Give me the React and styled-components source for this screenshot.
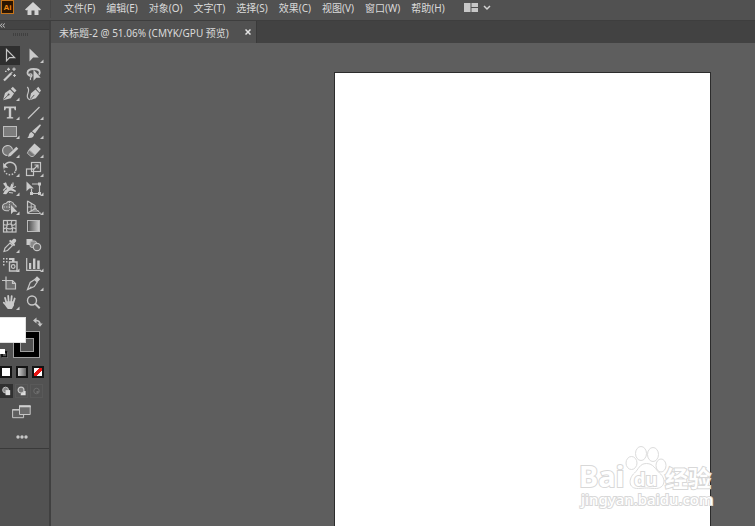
import React from 'react'
import { styled, createGlobalStyle } from 'styled-components'

const menus = [
  '文件(F)', '编辑(E)', '对象(O)', '文字(T)', '选择(S)',
  '效果(C)', '视图(V)', '窗口(W)', '帮助(H)',
]

const line = { fill: 'none', stroke: '#c6c6c6', strokeWidth: 1.2 }
const thin = { fill: 'none', stroke: '#c6c6c6', strokeWidth: 0.9 }
const solid = { fill: '#cacaca' }

// every icon is drawn on a 24x19 cell, "more" adds the flyout corner
const tools = [
  { name: '选择工具', active: true, icon: <path {...line} d="M6.5 3.500v11.300l3.100-3.200h5z" /> },
  { name: '直接选择工具', more: true, icon: <path {...solid} d="M5.500 2.500v13l3.600-4h5.700z" /> },
  {
    name: '魔棒工具',
    icon: (
      <g>
        <path d="M4 15.500l7.300-7.300" stroke="#cacaca" strokeWidth="2.200" />
        <path {...line} d="M8.500 2.800v3M7 4.300h3M14 2.500v3.400M12.300 4.200h3.400M14.500 9v3M13 10.500h3M5 6.300h1.600M11.300 8.200l1-1" />
      </g>
    ),
  },
  {
    name: '套索工具',
    icon: (
      <g>
        <path {...line} strokeWidth="1.800" d="M8 11.200c-3-.2-4.700-1.600-4.500-3.500C3.700 5.300 6.300 4 9.500 4s6.300 1.200 6.300 3.500c0 1-.4 1.700-1 2.200" />
        <path {...line} d="M5 10.300c0-1.800 3-1.800 3 0 0 2-2.300 1.500-1.500 4.700" />
        <path {...solid} d="M9.500 4.500v11.200l2.800-3h4.400z" />
      </g>
    ),
  },
  {
    name: '钢笔工具',
    more: true,
    icon: (
      <g>
        <path {...solid} d="M3 16.200l2-7.300 5-3.300 4 4-3.200 4.700z" />
        <path {...solid} d="M10.800 4.700l2-2 3.700 3.800-1.900 2z" />
        <path d="M3.500 15.700l4.800-4.800" stroke="#525252" strokeWidth="0.900" />
        <circle cx="8.600" cy="10.600" r="1" fill="#525252" />
      </g>
    ),
  },
  {
    name: '曲率工具',
    icon: (
      <g>
        <path {...solid} d="M5.500 16.200l1.500-7 4.500-3.600 4 4-3.700 4.600z" />
        <path {...solid} d="M12.300 4.700l2-2 2.700 3.800-1.400 2z" />
        <path d="M6 15.700l4.300-4.800" stroke="#525252" strokeWidth="0.900" />
        <path {...line} d="M3.200 3c3 2.500.8 5.300.2 8-.4 2.200.5 4.500 2.500 4.700" />
      </g>
    ),
  },
  { name: '文字工具', more: true, icon: <path {...solid} d="M4 3.500h12v3.700h-1.200L14 5.200h-2.800v8.700l2 .4v1.200H6.800v-1.200l2-.4V5.200H6l-.8 2H4z" /> },
  { name: '直线段工具', more: true, icon: <path {...line} d="M4 15.500L15.500 4" /> },
  { name: '矩形工具', more: true, icon: <rect x="3.500" y="4.500" width="13" height="10" fill="#7c7c7c" stroke="#bdbdbd" /> },
  {
    name: '画笔工具',
    more: true,
    icon: (
      <g {...solid}>
        <path d="M16 2.300l1 1-6 8.300-3-2.400z" />
        <path d="M7.500 10l2.500 2.200c.1 2.600-2.200 4.500-6.700 3.600 1.600-.8 1.300-2.100 1.900-3.500.4-1.100 1.300-1.900 2.300-2.300z" />
      </g>
    ),
  },
  {
    name: 'Shaper 工具',
    more: true,
    icon: (
      <g>
        <path fill="#777" stroke="#c6c6c6" strokeWidth="1.200" d="M7.500 14.500a5 5 0 1 1 5-6" />
        <path {...solid} d="M8 15.800l.6-2.800 7.700-7.300 2 2.100-7.500 7.300z" />
      </g>
    ),
  },
  {
    name: '橡皮擦工具',
    more: true,
    icon: (
      <g>
        <path {...solid} d="M10.500 2.500l6.300 5.500-5.500 6-6.500-5.500z" />
        <path fill="#777" stroke="#c6c6c6" strokeWidth="0.800" d="M5 8.800l5.800 5-1.500 1.700H7l-3.700-3.300z" />
      </g>
    ),
  },
  {
    name: '旋转工具',
    more: true,
    icon: (
      <g>
        <path {...line} strokeWidth="1.500" d="M4.600 5.600A6 6 0 0 1 15.500 11" />
        <path {...line} strokeWidth="1.500" strokeDasharray="1.500 1.500" d="M15.200 11.700A6 6 0 0 1 4 8.500" />
        <path {...solid} d="M3.200 2.700v5h5z" />
      </g>
    ),
  },
  {
    name: '比例缩放工具',
    more: true,
    icon: (
      <g>
        <rect {...line} x="7.500" y="2.500" width="9" height="9" />
        <rect {...line} x="2.500" y="9" width="7" height="6.500" />
        <path {...line} d="M9 10l4.500-4.500M10.500 5h3.500v3.500" />
      </g>
    ),
  },
  {
    name: '宽度工具',
    more: true,
    icon: (
      <g>
        <path {...solid} d="M3 4.500l3-1.300 1.200 3.300 2.800 2 1.400-4 2 1.800-1 3 3.600 2.400-.5 1.200-4.500-1.300-2 .5-2.800 3.200-3.200-.3 1.800-3.500L7 10z" />
        <path {...line} d="M3.300 11.500L6 8.500M9 13.500l4 .5M13 3.500v3M12 9l4-1.500" />
      </g>
    ),
  },
  {
    name: '自由变换工具',
    more: true,
    icon: (
      <g>
        <path {...line} d="M8 5h7.500v9.500h-8V10" />
        <path {...solid} d="M2.500 2.500v9.700l2.800-2.700h4.500zM14 3.500h3v3h-3zM14 13h3v3h-3zM6 13h3v3H6z" />
      </g>
    ),
  },
  {
    name: '形状生成器工具',
    more: true,
    icon: (
      <g>
        <path fill="#6f6f6f" stroke="#c6c6c6" strokeWidth="1.100" d="M9 12.800H6.700a4 3.800 0 0 1-.5-7.600 4.300 4 0 0 1 7.800 1.300c1.500.4 2.300 1.500 2.300 2.800" />
        <path {...thin} d="M3.500 9h8M9.500 3.500v8" strokeDasharray="1.500 1" />
        <path {...solid} d="M11 7v9.300l2.400-2.600h4z" />
      </g>
    ),
  },
  {
    name: '透视网格工具',
    more: true,
    icon: (
      <g>
        <path {...line} d="M3.500 2.800v12.500M3.500 3l7.500 4.500v3.200L3.500 15" />
        <path {...thin} d="M3.500 9h8M7.200 5v8.200M11 10.500l6 5M3.500 15.500h13M7 13h8M9 11h4" />
      </g>
    ),
  },
  {
    name: '网格工具',
    icon: (
      <g>
        <rect {...line} x="3.500" y="3.500" width="12.500" height="11.500" />
        <path {...line} d="M3.500 7.500c4 2 5-2 8 0s3-.5 4.500-1M3.500 12c3-3 5 1.500 8-.5s3 .5 4.500 0M7 3.500c2 3.500-2 6 0 11.500M12 3.500c-3 4 2.500 6 0 11.500" />
      </g>
    ),
  },
  {
    name: '渐变工具',
    icon: (
      <g>
        <defs>
          <linearGradient id="toolGradient">
            <stop offset="0" stopColor="#484848" />
            <stop offset="1" stopColor="#d2d2d2" />
          </linearGradient>
        </defs>
        <rect x="3.500" y="3.500" width="12" height="11" fill="url(#toolGradient)" stroke="#bbb" />
      </g>
    ),
  },
  {
    name: '吸管工具',
    more: true,
    icon: (
      <g>
        <path {...line} d="M4 15.500l1-3.500 5-5 2.500 2.500-5 5z" />
        <path {...solid} d="M9 5l1.200-1.200 1.300 1 1.500-1.600c2-1.500 4.200.7 2.800 2.600L14.200 7.500l1 1.500-1.200 1.200z" />
      </g>
    ),
  },
  {
    name: '混合工具',
    icon: (
      <g>
        <rect x="2.500" y="3" width="6" height="6" fill="#cacaca" />
        <rect x="6" y="5" width="6.500" height="6.500" rx="2" fill="#8a8a8a" stroke="#bbb" />
        <circle cx="13" cy="11" r="3.700" fill="#6d6d6d" stroke="#c6c6c6" strokeWidth="1.200" />
      </g>
    ),
  },
  {
    name: '符号喷枪工具',
    more: true,
    icon: (
      <g>
        <path {...line} strokeWidth="1.400" d="M9.500 7h7.500v9H9.500z" />
        <circle {...line} cx="13.200" cy="11.500" r="1.800" />
        <path {...solid} d="M9 3h5.500v4H12V5H9zM3 3h1.500v1.500H3zM6 3h1.500v1.500H6zM3 6h1.500v1.500H3zM6 6h1.500v1.500H6zM3 9h1.500v1.500H3z" />
      </g>
    ),
  },
  {
    name: '柱形图工具',
    more: true,
    icon: (
      <g>
        <path {...line} d="M2.700 3v12.300H17" />
        <path {...solid} d="M5 8h2.200v6H5zM9 3.500h2.400V14H9zM13.200 5.500h2.500V14h-2.500z" />
      </g>
    ),
  },
  {
    name: '画板工具',
    icon: (
      <g>
        <path fill="#707070" stroke="#c6c6c6" strokeWidth="1.200" d="M6 6.500h6.500l3 3v5.500H6z" />
        <path {...line} d="M2 6.500h5M6 2.500v5M12.500 6.500v3h3" />
      </g>
    ),
  },
  {
    name: '切片工具',
    more: true,
    icon: (
      <g>
        <path {...line} d="M3.500 15.500l2.700-7 4.500-3 2.500 2.500-3 4.500z" />
        <path {...solid} d="M10.500 5l2.500-2.700 3.200 3L13.600 8zM3 16l4-3.700 1 1z" />
      </g>
    ),
  },
  {
    name: '抓手工具',
    more: true,
    icon: (
      <g>
        <path d="M6.200 9L5 4.800M8.600 8.500L8.200 3M11.200 8.500l.5-5.300M13.400 9.500l1.300-4M6.500 12.500L3.800 9.700" stroke="#cacaca" strokeWidth="1.800" strokeLinecap="round" />
        <path {...solid} d="M5.500 8.300h8.700l-.3 4.300-2 3.400H7.800L5.500 13z" />
      </g>
    ),
  },
  {
    name: '缩放工具',
    icon: (
      <g>
        <circle {...line} strokeWidth="1.400" cx="8" cy="7.500" r="4.500" />
        <path d="M11.200 10.700l4.500 4.500" stroke="#c6c6c6" strokeWidth="2" />
      </g>
    ),
  },
]

const App = () => {
  return (
    <Screen>
      <GlobalStyle />

      <MenuBar>
        <Logo viewBox="0 0 15 15" role="img" aria-label="Ai">
          <rect x="1.500" y=".5" width="12" height="13" fill="#2b1501" stroke="#c87519" />
          <text x="7.500" y="10" textAnchor="middle" fontSize="8" fontWeight="700" fill="#f08a12">Ai</text>
        </Logo>
        <HomeButton aria-label="主页">
          <svg width="16" height="14" viewBox="0 0 16 14">
            <path d="M8 0L0 7.500l1.200 1L2.500 7.700V13h4V8.500h3V13h4V7.700l1.300.8 1.200-1z" fill="#d2d2d2" />
          </svg>
        </HomeButton>
        <Menus>
          {menus.map((m) => <MenuItem key={m}>{m}</MenuItem>)}
        </Menus>
        <LayoutButton aria-label="切换工作区">
          <svg width="28" height="12" viewBox="0 0 28 12">
            <path d="M0 2h6.500v9H0zM7.500 2H14v4H7.500zM7.500 7H14v4H7.500z" fill="#c8c8c8" />
            <path d="M20 5l3 3 3-3" fill="none" stroke="#d4d4d4" strokeWidth="1.500" />
          </svg>
        </LayoutButton>
      </MenuBar>

      <Body>
        <Sidebar>
          <Collapse aria-label="折叠">
            <svg width="5" height="5" viewBox="0 0 5 5">
              <path d="M2 .5l-1.500 2 1.500 2M4.500.5L3 2.500l1.500 2" fill="none" stroke="#ccc" />
            </svg>
          </Collapse>
          <Grip />
          <ToolGrid>
            {tools.map((t) => (
              <Tool key={t.name} aria-label={t.name} $active={t.active}>
                <svg width="24" height="19" viewBox="0 0 24 19">
                  {t.icon}
                  {t.more && <path d="M19.500 13.500v3.500H16z" fill="#c8c8c8" />}
                </svg>
              </Tool>
            ))}
          </ToolGrid>

          <Swatches>
            <Stroke aria-label="描边"><i /></Stroke>
            <Fill aria-label="填色" />
            <SwapButton aria-label="互换填色和描边">
              <svg width="10" height="10" viewBox="0 0 10 10">
                <path d="M2 3.500c3.500-.3 5 1 5 4" fill="none" stroke="#c4c4c4" strokeWidth="1.600" />
                <path d="M0 3.500L3.500.5v6zM4.300 6.500h5.400L7 9.800z" fill="#c4c4c4" />
              </svg>
            </SwapButton>
            <DefaultButton aria-label="默认填色和描边">
              <svg width="8" height="9" viewBox="0 0 8 9">
                <rect x="2" y="3" width="5" height="5" fill="#525252" stroke="#000" strokeWidth="1.500" />
                <path d="M1.500 8.700h6.200V2.500" fill="none" stroke="#aaa" strokeWidth="0.600" />
                <rect width="5" height="5" fill="#fff" />
              </svg>
            </DefaultButton>
          </Swatches>

          <PaintRow>
            <Paint aria-label="颜色" $bg="#fff" />
            <Paint aria-label="渐变" $bg="linear-gradient(90deg, #eee, #444)" />
            <Paint aria-label="无" $bg="linear-gradient(135deg, #fff 38%, #e81313 38%, #e81313 62%, #fff 62%)" />
          </PaintRow>

          <ModeRow>
            <Mode aria-label="正常绘图" $active>
              <svg width="12" height="12" viewBox="0 0 12 12">
                <circle cx="5" cy="5" r="3.200" fill="#888" stroke="#c6c6c6" />
                <path d="M5 5h5v5.500H5z" fill="#dedede" />
              </svg>
            </Mode>
            <Mode aria-label="背面绘图">
              <svg width="12" height="12" viewBox="0 0 12 12">
                <path d="M6 6h4.500v4.500H5z" fill="#dedede" />
                <circle cx="5.500" cy="5" r="3.200" fill="#777" stroke="#c6c6c6" strokeWidth="1.300" />
              </svg>
            </Mode>
            <Mode aria-label="内部绘图" disabled>
              <svg width="12" height="12" viewBox="0 0 12 12">
                <circle cx="6" cy="6" r="3" fill="#505050" stroke="#707070" />
                <path d="M6 6h2.500A2.500 2.500 0 0 1 6 8.500z" fill="#707070" />
              </svg>
            </Mode>
          </ModeRow>

          <ScreenMode aria-label="更改屏幕模式">
            <svg width="19" height="14" viewBox="0 0 19 14">
              <path d="M.6 4.500h11v8.200H.6z" fill="#606060" stroke="#c6c6c6" />
              <path d="M.6 4.800h11" stroke="#c6c6c6" strokeWidth="1.600" />
              <path d="M7.500 1h10.700v8.500H7.500z" fill="#6c6c6c" stroke="#c6c6c6" />
              <path d="M7 1.300h11.700" stroke="#d0d0d0" strokeWidth="2" />
            </svg>
          </ScreenMode>
          <MoreButton aria-label="编辑工具栏">
            <svg width="12" height="4" viewBox="0 0 12 4">
              <g fill="#c8c8c8">
                <circle cx="2" cy="2" r="1.700" />
                <circle cx="6" cy="2" r="1.700" />
                <circle cx="10" cy="2" r="1.700" />
              </g>
            </svg>
          </MoreButton>
        </Sidebar>

        <Workspace>
          <TabBar>
            <Tab>
              <span>未标题-2 @ 51.06% (CMYK/GPU 预览)</span>
              <CloseButton aria-label="关闭">
                <svg width="6" height="6" viewBox="0 0 6 6">
                  <path d="M.5.500l5 5M5.500.500l-5 5" stroke="#e4e4e4" strokeWidth="1.500" />
                </svg>
              </CloseButton>
            </Tab>
          </TabBar>
          <Canvas>
            <Artboard />
          </Canvas>
        </Workspace>
      </Body>

      <Watermark viewBox="0 0 140 70" role="img" aria-label="Baidu 经验">
        <g fill="#fff" stroke="#dcdcdc" strokeWidth="1">
          <ellipse cx="53.500" cy="19" rx="5.500" ry="6.500" />
          <ellipse cx="63" cy="9.500" rx="5.500" ry="7" />
          <ellipse cx="75" cy="10.500" rx="5.500" ry="7" />
          <ellipse cx="83" cy="21.500" rx="5" ry="6.500" />
          <path d="M68.500 19.500c-7 0-8 6-12 9.500-6 5-7 16 4 15.500 4-.2 5-.5 8-.5s4 .3 8 .5c11 .5 12-10 5-15.500-4-3.500-6-9.500-13-9.500z" />
        </g>
        <g fill="#fff" stroke="#d8d8d8" strokeWidth="2" paintOrder="stroke" fontWeight="700">
          <text x="1" y="43" fontSize="29">Bai</text>
          <text x="56" y="42" fontSize="18">du</text>
          <text x="87" y="43" fontSize="23">经验</text>
          <text x="3" y="61" fontSize="15" fontWeight="500">jingyan.baidu.com</text>
        </g>
      </Watermark>
    </Screen>
  )
}

const GlobalStyle = createGlobalStyle`
  * { box-sizing: border-box; }
  body {
    margin: 0;
    background: #5e5e5e;
    font-family: "Noto Sans", "Noto Sans CJK SC", sans-serif;
  }
  button {
    display: flex;
    align-items: center;
    justify-content: center;
    margin: 0;
    padding: 0;
    border: 0;
    background: none;
    color: inherit;
    font: inherit;
  }
  svg { display: block; }
`

const Screen = styled.div`
  position: relative;
  display: flex;
  flex-direction: column;
  height: 100vh;
  overflow: hidden;
  color: #dadada;
  font-size: 10px;
`

const MenuBar = styled.header`
  display: flex;
  align-items: flex-start;
  height: 21px;
  background: #515151;
  border-bottom: 1px solid #3e3e3e;
`

const Logo = styled.svg`
  width: 15px;
  height: 15px;
  font-family: "Liberation Sans", sans-serif;
`

const HomeButton = styled.button`
  width: 36px;
  height: 18px;
  border-right: 1px solid #484848;
`

const Menus = styled.nav`
  display: flex;
  gap: 11px;
  padding: 0 19px 0 13px;
`

const MenuItem = styled.button`
  height: 14px;
  white-space: nowrap;
`

const LayoutButton = styled.button`
  height: 14px;
`

const Body = styled.div`
  display: flex;
  flex: 1;
  min-height: 0;
`

const Sidebar = styled.aside`
  display: flex;
  flex-direction: column;
  flex: none;
  width: 51px;
  background: #525252;
  border-right: 2px solid #404040;
`

const Collapse = styled.button`
  justify-content: flex-start;
  height: 9px;
  background: #444;
  border-bottom: 1px solid #3c3c3c;
`

const Grip = styled.div`
  width: 16px;
  height: 3px;
  margin: 3px 13px 10px;
  background: repeating-linear-gradient(90deg, #404040 0 1px, #525252 1px 2px);
`

const ToolGrid = styled.div`
  display: grid;
  grid-template-columns: 24px 24px;
  grid-auto-rows: 19px;
`

const Tool = styled.button`
  justify-content: flex-start;
  background: ${props => props.$active ? 'linear-gradient(90deg, #2f2f2f 20px, transparent 20px)' : 'none'};
`

const Swatches = styled.div`
  display: grid;
  grid-template-columns: 13px 13px 17px;
  grid-template-rows: 14px 12px 15px;
  margin-top: 5px;
`

const Stroke = styled.button`
  grid-area: 2 / 2 / 4 / 4;
  width: 27px;
  background: #000;
  border: 1px solid #a0a0a0;

  i {
    width: 14px;
    height: 14px;
    background: #525252;
    border: 1px solid #a0a0a0;
  }
`

const Fill = styled.button`
  grid-area: 1 / 1 / 3 / 3;
  background: #fff;
  border: 1px solid #e0e0e0;
  border-left: 0;
`

const SwapButton = styled.button`
  grid-area: 1 / 3;
  justify-content: flex-end;
  align-items: flex-start;
`

const DefaultButton = styled.button`
  grid-area: 3 / 1;
  justify-content: flex-start;
  align-items: flex-end;
`

const PaintRow = styled.div`
  display: flex;
  gap: 4px;
  margin-top: 8px;
`

const Paint = styled.button`
  width: 12px;
  height: 12px;
  border: 2px solid #141414;
  background: ${props => props.$bg};
  background-origin: border-box;
`

const ModeRow = styled.div`
  display: flex;
  gap: 2px;
  margin-top: 6px;
`

const Mode = styled.button`
  width: 13px;
  height: 14px;
  background: ${props => props.$active ? '#303030' : '#525252'};
  border: 1px solid ${props => props.$active ? '#303030' : '#595959'};
`

const ScreenMode = styled.button`
  height: 20px;
  padding: 7px 6px 0 0;
  margin-bottom: 17px;
`

const MoreButton = styled.button`
  height: 14px;
  padding: 0 6px 9px 0;
  border-bottom: 1px solid #3a3a3a;
`

const Workspace = styled.main`
  display: flex;
  flex-direction: column;
  flex: 1;
  min-width: 0;
`

const TabBar = styled.div`
  display: flex;
  height: 22px;
  background: #424242;
`

const Tab = styled.div`
  display: flex;
  align-items: center;
  gap: 16px;
  padding: 0 5px 0 8px;
  background: #515151;
  border-right: 1px solid #3a3a3a;
  white-space: nowrap;
`

const CloseButton = styled.button`
  height: 10px;
`

const Canvas = styled.div`
  display: flex;
  flex: 1;
  padding: 29px 44px 0 283px;
  background: #5e5e5e;
`

const Artboard = styled.div`
  flex: 1;
  background: #fff;
  border: 1px solid #2c2c2c;
  border-bottom: 0;
`

const Watermark = styled.svg`
  position: absolute;
  right: 37px;
  bottom: 12px;
  width: 140px;
  height: 70px;
  font-family: "Noto Sans", "Noto Sans CJK SC", sans-serif;
`

export default App
